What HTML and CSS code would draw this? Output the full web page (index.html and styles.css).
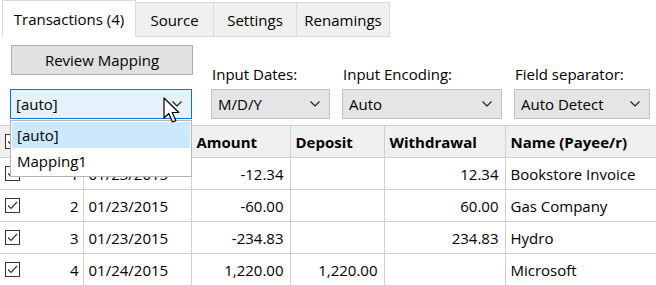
FILE: index.html
```html
<!DOCTYPE html>
<html>
<head>
<meta charset="utf-8">
<link rel="stylesheet" href="styles.css">
</head>
<body>
<div class="app">
  <div class="tabs">
    <div class="tab active">Transactions (4)</div>
    <div class="tab t-src">Source</div>
    <div class="tab t-set">Settings</div>
    <div class="tab t-ren">Renamings</div>
    <div class="tab-fill"></div>
  </div>
  <div class="toolbar">
    <div class="field field-map">
      <button class="btn">Review Mapping</button>
      <div class="combo combo-open">
        <span>[auto]</span>
        <svg class="chev" width="10" height="6" viewBox="0 0 10 6"><path d="M0.5 0.5 L5 5 L9.5 0.5" fill="none" stroke="#222" stroke-width="1.2"/></svg>
        <div class="droplist">
          <div class="opt sel">[auto]</div>
          <div class="opt">Mapping1</div>
        </div>
        <svg class="cursor" width="18" height="28" viewBox="0 0 18 28"><path d="M1 1 L1 21 L5.8 16.5 L9.5 25 L12.8 23.6 L9.2 15.5 L15.8 15.5 Z" fill="#fff" stroke="#000" stroke-width="1.2" stroke-linejoin="round"/></svg>
      </div>
    </div>
    <div class="field field-dates">
      <label>Input Dates:</label>
      <div class="combo"><span>M/D/Y</span><svg class="chev" width="10" height="6" viewBox="0 0 10 6"><path d="M0.5 0.5 L5 5 L9.5 0.5" fill="none" stroke="#222" stroke-width="1.2"/></svg></div>
    </div>
    <div class="field field-enc">
      <label>Input Encoding:</label>
      <div class="combo"><span>Auto</span><svg class="chev" width="10" height="6" viewBox="0 0 10 6"><path d="M0.5 0.5 L5 5 L9.5 0.5" fill="none" stroke="#222" stroke-width="1.2"/></svg></div>
    </div>
    <div class="field field-sep">
      <label>Field separator:</label>
      <div class="combo"><span>Auto Detect</span><svg class="chev" width="10" height="6" viewBox="0 0 10 6"><path d="M0.5 0.5 L5 5 L9.5 0.5" fill="none" stroke="#222" stroke-width="1.2"/></svg></div>
    </div>
  </div>
  <table class="grid">
    <colgroup>
      <col class="c-chk"><col class="c-date"><col class="c-amt"><col class="c-dep"><col class="c-wd"><col class="c-name">
    </colgroup>
    <thead>
      <tr>
        <th><div class="chkwrap"><span class="chk"><svg width="11" height="9" viewBox="0 0 11 9"><path d="M1 4.5 L4 7.5 L10 1" fill="none" stroke="#333" stroke-width="1.2"/></svg></span></div></th>
        <th>Date</th>
        <th>Amount</th>
        <th>Deposit</th>
        <th>Withdrawal</th>
        <th>Name (Payee/r)</th>
      </tr>
    </thead>
    <tbody>
      <tr>
        <td><div class="chkwrap"><span class="chk"><svg width="11" height="9" viewBox="0 0 11 9"><path d="M1 4.5 L4 7.5 L10 1" fill="none" stroke="#333" stroke-width="1.2"/></svg></span><span>1</span></div></td>
        <td>01/23/2015</td><td class="r">-12.34</td><td></td><td class="r">12.34</td><td>Bookstore Invoice</td>
      </tr>
      <tr>
        <td><div class="chkwrap"><span class="chk"><svg width="11" height="9" viewBox="0 0 11 9"><path d="M1 4.5 L4 7.5 L10 1" fill="none" stroke="#333" stroke-width="1.2"/></svg></span><span>2</span></div></td>
        <td>01/23/2015</td><td class="r">-60.00</td><td></td><td class="r">60.00</td><td>Gas Company</td>
      </tr>
      <tr>
        <td><div class="chkwrap"><span class="chk"><svg width="11" height="9" viewBox="0 0 11 9"><path d="M1 4.5 L4 7.5 L10 1" fill="none" stroke="#333" stroke-width="1.2"/></svg></span><span>3</span></div></td>
        <td>01/23/2015</td><td class="r">-234.83</td><td></td><td class="r">234.83</td><td>Hydro</td>
      </tr>
      <tr>
        <td><div class="chkwrap"><span class="chk"><svg width="11" height="9" viewBox="0 0 11 9"><path d="M1 4.5 L4 7.5 L10 1" fill="none" stroke="#333" stroke-width="1.2"/></svg></span><span>4</span></div></td>
        <td>01/24/2015</td><td class="r">1,220.00</td><td class="r">1,220.00</td><td></td><td>Microsoft</td>
      </tr>
    </tbody>
  </table>
</div>
</body>
</html>
```

FILE: styles.css
```css
* { box-sizing: border-box; }
html, body { margin: 0; padding: 0; background: #fff; }
body {
  font-family: "Open Sans", "Noto Sans", sans-serif;
  font-size: 15px;
  color: #000;
  width: 656px;
  height: 285px;
  overflow: hidden;
}
.app { position: relative; }

.tabs {
  display: flex;
  align-items: flex-end;
  height: 37px;
  padding-left: 2px;
}
.tab {
  height: 35px;
  display: flex;
  align-items: center;
  justify-content: center;
  background: #f0f0f0;
  border: 1px solid #dadada;
  border-left: none;
  white-space: nowrap;
}
.tab.active {
  height: 37px;
  width: 134px;
  background: #fff;
  border-left: 1px solid #dadada;
  border-bottom: none;
}
.t-src { width: 78px; }
.t-set { width: 83px; }
.t-ren { width: 93px; }
.tab-fill { flex: 1; }

.toolbar {
  display: flex;
  align-items: flex-end;
  padding: 8px 0 0 10px;
  height: 82px;
}
.field { display: flex; flex-direction: column; }
.field label { line-height: 18px; margin: 0 0 6px 1px; }
.field-map { width: 182px; }
.field-dates { width: 119px; margin-left: 19px; }
.field-enc { width: 160px; margin-left: 12px; }
.field-sep { width: 136px; margin-left: 12px; }

.btn {
  font: inherit;
  color: #000;
  height: 30px;
  width: 182px;
  margin-left: 1px;
  background: #e1e1e1;
  border: 1px solid #adadad;
  margin-bottom: 14px;
  padding: 0;
}
.combo {
  position: relative;
  height: 30px;
  background: #e5e5e5;
  border: 1px solid #c4c4c4;
  display: flex;
  align-items: center;
  justify-content: space-between;
  padding: 0 9px 0 6px;
}
.combo-open {
  background: #e5f1fb;
  border-color: #0078d7;
  padding-left: 5px;
}
.chev { display: block; }

.droplist {
  position: absolute;
  left: -1px;
  right: -1px;
  top: 30px;
  background: #fff;
  border: 1px solid #b5b5b5;
  padding: 1px 1px 2px;
  z-index: 5;
}
.opt { height: 26px; line-height: 26px; padding-left: 5px; }
.opt.sel { background: #cce8ff; }
.cursor { position: absolute; left: 152px; top: 7px; z-index: 6; }

.grid {
  border-collapse: collapse;
  table-layout: fixed;
  width: 656px;
  margin-top: 6px;
}
.c-chk { width: 83px; }
.c-date { width: 108px; }
.c-amt { width: 99px; }
.c-dep { width: 94px; }
.c-wd { width: 121px; }
.c-name { width: 151px; }
.grid th, .grid td {
  border: 1px solid #d0d0d0;
  height: 32px;
  padding: 0 6px 0 5px;
  white-space: nowrap;
  overflow: hidden;
}
.grid th {
  background: #f0f0f0;
  text-align: left;
  font-weight: 700;
}
.grid td.r { text-align: right; }
.grid tr > :first-child { border-left: none; padding-right: 4px; }
.grid tr > :last-child { border-right: none; }
.chkwrap { display: flex; align-items: center; justify-content: space-between; }
.chk {
  display: inline-flex;
  width: 15px;
  height: 15px;
  border: 1px solid #333;
  align-items: center;
  justify-content: center;
  background: #fff;
}
```
